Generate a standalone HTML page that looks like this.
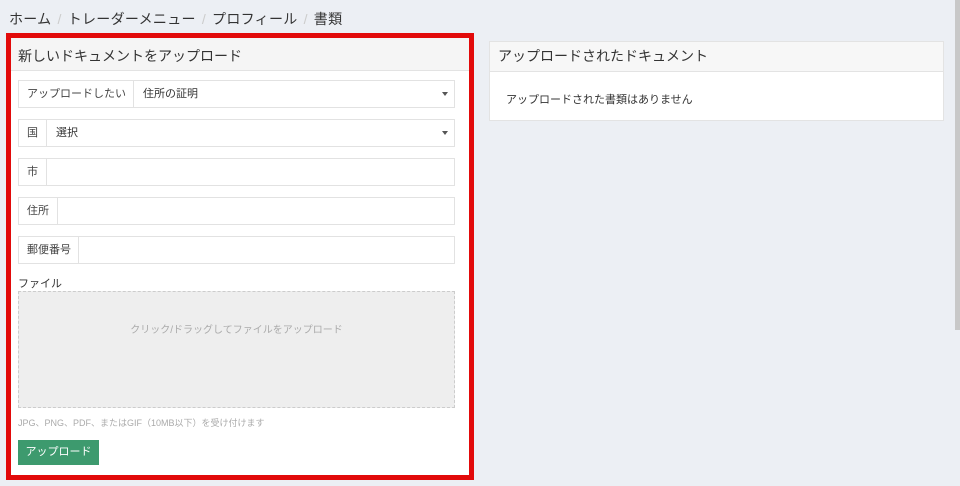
<!DOCTYPE html>
<html><head><meta charset="utf-8"><style>
*{box-sizing:border-box;margin:0;padding:0}
body{width:960px;height:486px;background:#eceff4;font-family:"Liberation Sans","Noto Sans CJK JP",sans-serif;position:relative;overflow:hidden;color:#333}
.a{position:absolute;white-space:nowrap}
.bc{left:9px;top:9px;font-size:14px;color:#333;letter-spacing:.3px}
.bc span{color:#ccc;margin:0 6px}
.red{left:6px;top:33px;width:468px;height:447px;border:5px solid #e20a0a}
.panel{left:11px;top:38px;width:458px;height:437px;background:#fff}
.ph{left:0;top:0;width:100%;height:33px;background:#f5f5f5;border-bottom:1px solid #e3e3e3;font-size:14px;line-height:37px;padding:0 7px;color:#333}
.grp{left:18px;width:437px;height:28px;border:1px solid #e2e2e2;background:#fff;font-size:11px;line-height:27px}
.lab{position:absolute;left:0;top:0;height:100%;border-right:1px solid #e2e2e2;background:#fff;padding:0 8px;color:#444;white-space:nowrap}
.val{position:absolute;top:0;color:#333}
.car{position:absolute;right:6px;top:11px;border-left:3px solid transparent;border-right:3px solid transparent;border-top:4px solid #555}
.drop{left:18px;top:291px;width:437px;height:117px;background:#eeeeee;border:1px dashed #ccc;text-align:center;font-size:10px;color:#aaa;padding-top:29px}
.btn{left:18px;top:440px;width:81px;height:25px;background:#3d9a6e;color:#fff;font-size:11px;text-align:center;line-height:25px}
.rp{left:489px;top:41px;width:455px;height:80px;background:#fff;border:1px solid #e3e3e3}
.rh{left:0;top:0;width:100%;height:30px;background:#f7f7f7;border-bottom:1px solid #e3e3e3;font-size:14px;line-height:29px;padding:0 8px;color:#333}
</style></head><body>
<div class="a bc">ホーム<span>/</span>トレーダーメニュー<span>/</span>プロフィール<span>/</span>書類</div>
<div class="a red"></div>
<div class="a panel"><div class="a ph">新しいドキュメントをアップロード</div></div>
<div class="a grp" style="top:80px"><div class="lab" style="width:115px">アップロードしたい</div><div class="val" style="left:124px">住所の証明</div><div class="car"></div></div>
<div class="a grp" style="top:119px"><div class="lab" style="width:28px">国</div><div class="val" style="left:37px">選択</div><div class="car"></div></div>
<div class="a grp" style="top:158px"><div class="lab" style="width:28px">市</div></div>
<div class="a grp" style="top:197px"><div class="lab" style="width:39px">住所</div></div>
<div class="a grp" style="top:236px"><div class="lab" style="width:60px">郵便番号</div></div>
<div class="a" style="left:18px;top:275px;font-size:11px;color:#333">ファイル</div>
<div class="a drop">クリック/ドラッグしてファイルをアップロード</div>
<div class="a" style="left:18px;top:416px;font-size:9px;color:#aaa">JPG、PNG、PDF、またはGIF（10MB以下）を受け付けます</div>
<div class="a btn">アップロード</div>
<div class="a rp"><div class="a rh">アップロードされたドキュメント</div><div class="a" style="left:16px;top:49px;font-size:11px;color:#333">アップロードされた書類はありません</div></div>
<div class="a" style="left:955px;top:0;width:5px;height:330px;background:#c8c8c8"></div>
</body></html>
